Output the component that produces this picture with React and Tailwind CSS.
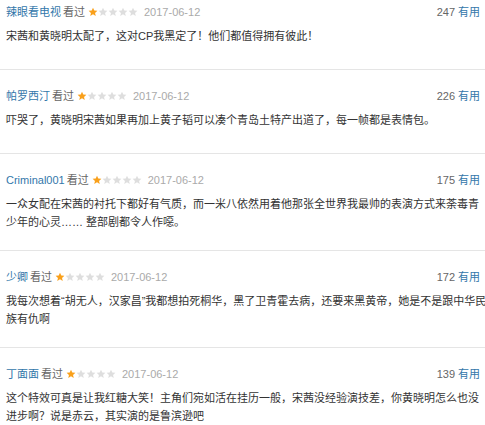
const COMMENTS = [
  {
    user: "辣眼看电视",
    date: "2017-06-12",
    votes: 247,
    text: "宋茜和黄晓明太配了，这对CP我黑定了！他们都值得拥有彼此！",
  },
  {
    user: "帕罗西汀",
    date: "2017-06-12",
    votes: 226,
    text: "吓哭了，黄晓明宋茜如果再加上黄子韬可以凑个青岛土特产出道了，每一帧都是表情包。",
  },
  {
    user: "Criminal001",
    date: "2017-06-12",
    votes: 175,
    text: "一众女配在宋茜的衬托下都好有气质，而一米八依然用着他那张全世界我最帅的表演方式来荼毒青少年的心灵…… 整部剧都令人作噁。",
  },
  {
    user: "少卿",
    date: "2017-06-12",
    votes: 172,
    text: "我每次想着\u201c胡无人，汉家昌\u201d我都想拍死桐华，黑了卫青霍去病，还要来黑黄帝，她是不是跟中华民族有仇啊",
  },
  {
    user: "丁面面",
    date: "2017-06-12",
    votes: 139,
    text: "这个特效可真是让我红糖大笑！主角们宛如活在挂历一般，宋茜没经验演技差，你黄晓明怎么也没进步啊？说是赤云，其实演的是鲁滨逊吧",
  },
];

// curly quotes would otherwise come out full-width from the CJK font
function withQuotes(text) {
  return text.split(/([\u201c\u201d])/).map((part, i) =>
    part === "\u201c" || part === "\u201d" ? (
      <span key={i} style={{ fontFamily: '"Liberation Sans", Arial' }}>
        {part}
      </span>
    ) : (
      part
    )
  );
}

function Star({ filled }) {
  return (
    <svg width="10" height="10" viewBox="0 0 24 24" className="block">
      <path
        d="M12 1.5l3.1 6.9 7.4.7-5.6 5 1.7 7.4L12 17.6l-6.6 3.9 1.7-7.4-5.6-5 7.4-.7z"
        fill={filled ? "#f9a01b" : "#dedede"}
      />
    </svg>
  );
}

function Rating({ value }) {
  return (
    <span className="flex items-center mx-[3px]">
      {[1, 2, 3, 4, 5].map((i) => (
        <Star key={i} filled={i <= value} />
      ))}
    </span>
  );
}

export default function App() {
  return (
    <div
      className="w-[485px] h-[425px] overflow-hidden bg-white text-[11px]"
      style={{ fontFamily: '"Liberation Sans", Arial, "Noto Sans CJK SC", sans-serif' }}
    >
      {COMMENTS.map((c, idx) => (
        <div
          key={c.user}
          className={
            idx === 0
              ? "pl-[6px] pr-[5px] pt-[4px] pb-[19px]"
              : "pl-[6px] pr-[5px] pt-[18px] pb-[19px] border-t border-[#e5e5e5]"
          }
        >
          <div className="flex items-center justify-between h-[16px] leading-[16px]">
            <div className="flex items-center">
              <span className="text-[#3377aa]">{c.user}</span>
              <span className="text-[#666] ml-[2px]">看过</span>
              <Rating value={1} />
              <span className="text-[#aaa] ml-[3px]">{c.date}</span>
            </div>
            <div>
              <span className="text-[#666]">{c.votes}</span>
              <span className="text-[#3377aa] ml-[3px]">有用</span>
            </div>
          </div>
          <p className="mt-[7px] mr-[-8px] min-h-[23px] leading-[18px] text-[#333]">
            {withQuotes(c.text)}
          </p>
        </div>
      ))}
    </div>
  );
}
